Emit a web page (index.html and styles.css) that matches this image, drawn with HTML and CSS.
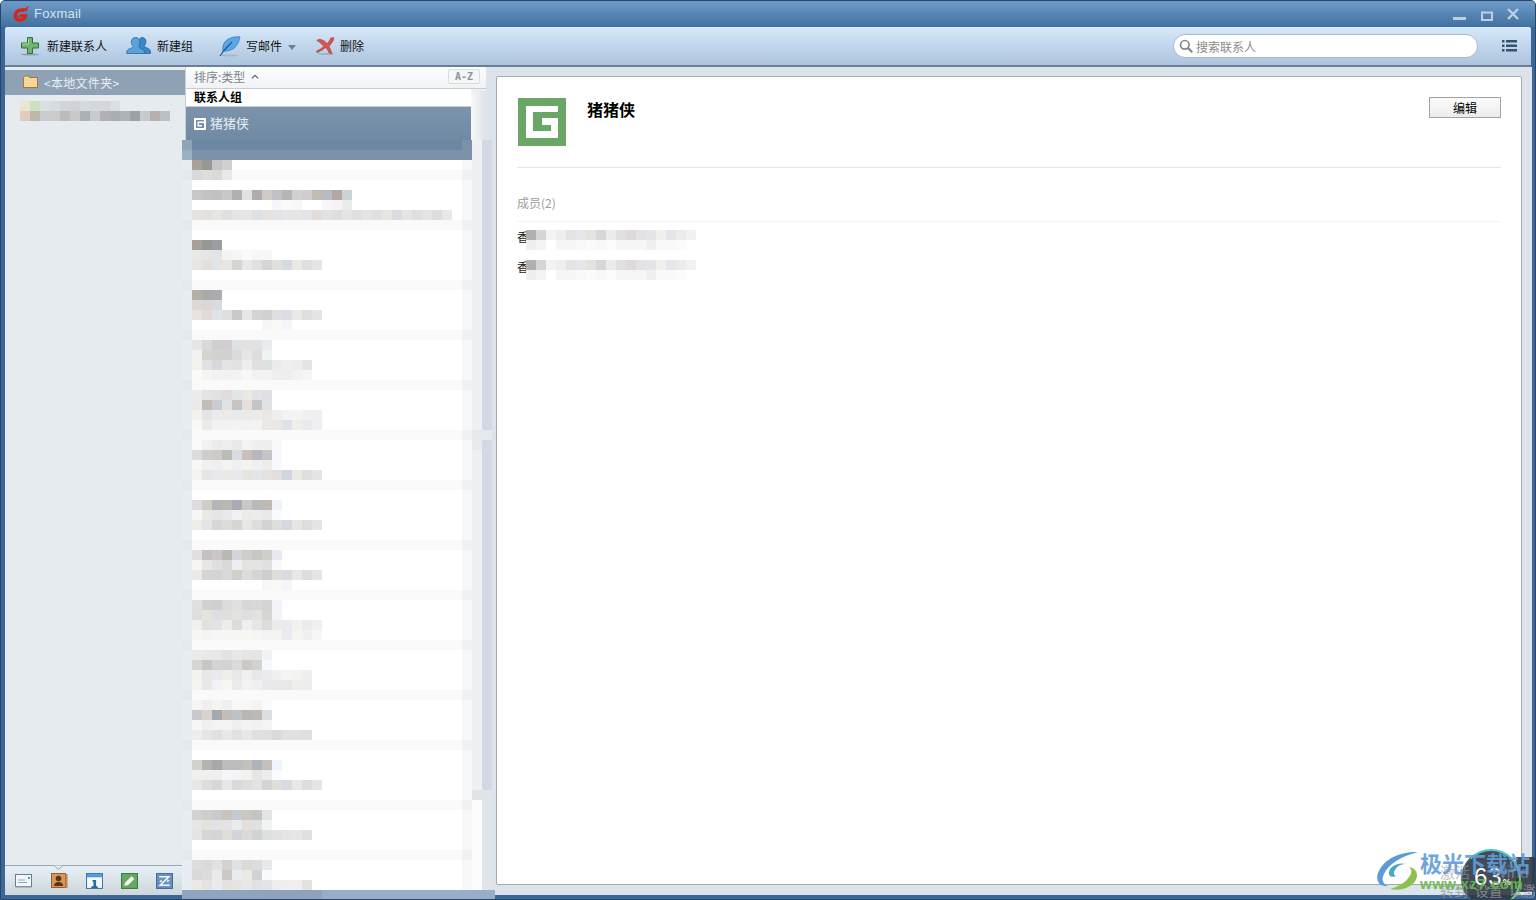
FILE: index.html
```html
<!DOCTYPE html>
<html lang="zh-CN">
<head>
<meta charset="utf-8">
<title>Foxmail</title>
<link rel="stylesheet" href="styles.css">
</head>
<body>
<div class="window">
  <header class="titlebar">
    <svg class="app-logo" viewBox="0 0 16 16"><path fill="#d3261c" d="M15.800 0 12 2.600C8.500 1.600 3.500 2.500 1.500 6 -.3 9.300.3 13 3 14.800c2.100 1.300 5.300 1.200 8-.3 2.200-1.300 3.300-3.300 3.500-6.300H7L5.300 11h4.600c-.8 1.100-2.500 1.500-3.800 1-1.500-.6-2-2.300-1.300-4 .8-2 3-2.500 5-1.700L14 4.500Z"/></svg>
    <span class="app-name">Foxmail</span>
    <div class="win-controls">
      <svg class="win-min" viewBox="0 0 13 3"><rect width="13" height="3" fill="#bccfe3"/></svg>
      <svg class="win-max" viewBox="0 0 12 10"><path fill="none" stroke="#bccfe3" stroke-width="2" d="M1 1.500h10v7.500H1z"/></svg>
      <svg class="win-close" viewBox="0 0 12 12"><path stroke="#bccfe3" stroke-width="2.400" d="M1 1l10 10M11 1 1 11"/></svg>
    </div>
  </header>

  <nav class="toolbar">
    <button class="tool tool-add">
      <svg class="ic-add" viewBox="0 0 20 20"><ellipse cx="10" cy="18.500" rx="9" ry="1" fill="#8da3b8"/><path fill="#6fb56c" stroke="#3d6b40" d="M7.500 1.500h5v5.500h6v5h-6v5.500h-5V12h-6V7h6z"/><path fill="none" stroke="#a5d8a0" d="M8.500 3v5h-6"/></svg>
      <span>新建联系人</span>
    </button>
    <button class="tool tool-group">
      <svg class="ic-group" viewBox="0 0 25 20"><path fill="#3f86c4" stroke="#1f5f9c" stroke-width=".7" d="M16 1.500c2.400 0 4 1.700 4 4.200 0 1.900-.8 3.500-1.900 4.500.4 1 3.400 1.700 5 2.800 1 .7 1.400 2.300 1.400 4.500h-8l-3-6-1-4c0-3.500 1.500-6 3.500-6Z"/><path fill="#5aa2dc" stroke="#1f5f9c" stroke-width=".7" d="M9.500 1.500c2.700 0 4.500 1.900 4.500 4.600 0 2-.9 3.500-2 4.500.4 1.100 3.500 1.800 5.200 3 1 .7 1.500 2 1.500 3.900H.6c0-1.900.5-3.200 1.500-3.900 1.700-1.200 4.800-1.900 5.200-3-1.100-1-2-2.500-2-4.500 0-2.700 1.800-4.600 4.200-4.600Z"/></svg>
      <span>新建组</span>
    </button>
    <button class="tool tool-write">
      <svg class="ic-write" viewBox="0 0 22 21"><ellipse cx="10" cy="19.500" rx="9" ry="1" fill="#a3b6ca"/><path fill="#5aa6e6" stroke="#2f79b8" stroke-width=".7" d="M21 .8C15 .5 8 2 5.200 7 3.800 9.600 3.600 12.600 3.800 15.200 8 15.300 13 14.500 16.300 11 19 8 20.500 4.500 21 .8Z"/><path fill="none" stroke="#1f5c95" stroke-width="1.200" d="M1 20 5 14.500 13 6"/></svg>
      <span>写邮件</span>
      <i class="drop"></i>
    </button>
    <button class="tool tool-del">
      <svg class="ic-del" viewBox="0 0 20 18"><ellipse cx="10" cy="17" rx="8" ry="1" fill="#9db0c4"/><path fill="#d9534f" stroke="#a83a36" stroke-width=".6" d="M.8 3.500 3 2.200c3.800.5 6.500 2.300 8.200 4.500C12.800 5 14 3 14.800 1L18 .6c-.5 3.500-2.800 6.200-5 8.800 1 2 2.200 4.500 3 7.300l-2.900-.8c-.8-2-2-4-3.200-5.500-2.200 1.700-5 3.400-8.800 5.300L.6 14c3-1.400 5.300-3 7.200-4.600C6 7.200 3.700 5 .8 3.500Z"/></svg>
      <span>删除</span>
    </button>
    <div class="search">
      <svg class="ic-search" viewBox="0 0 14 14"><circle cx="5.800" cy="5.800" r="4.300" fill="none" stroke="#7a8a98" stroke-width="1.700"/><path stroke="#7a8a98" stroke-width="2.200" d="m9 9 4.200 4.200"/></svg>
      <span>搜索联系人</span>
    </div>
    <svg class="ic-more" viewBox="0 0 15 12"><path fill="#34536f" d="M0 0h2.500v2.500H0zM4 0h11v2.500H4zM0 4.500h2.500V7H0zM4 4.500h11V7H4zM0 9h2.500v2.500H0zM4 9h11v2.500H4z"/></svg>
  </nav>

  <main class="body">
    <aside class="sidebar">
      <div class="folder-row">
        <svg class="ic-folder" viewBox="0 0 15 13"><path fill="#f6d694" stroke="#a8743a" d="M.5 2.500 1.500 1h4l1 1.500h8v10H.5z"/></svg>
        <span>&lt;本地文件夹&gt;</span>
      </div>
      <svg class="mosaic mosaic-side" data-mosaic="side"></svg>
      <div class="side-fill"></div>
      <div class="tabs">
        <svg class="notch" viewBox="0 0 11 5"><path fill="#e5ebef" stroke="#9ba5ae" d="M0 .5h1l4.500 4 4.500-4h1"/></svg>
        <svg class="tab-ic tab-first" viewBox="0 0 17 14"><rect x=".5" y=".5" width="16" height="12" fill="#f4f7fa" stroke="#6c7d93"/><rect x=".5" y="12" width="16" height="1.500" fill="#8694a8"/><path stroke="#8ea3bb" d="M3 6h7M3 8.500h9"/><rect x="13" y="3" width="2" height="2" fill="#4fa88c"/></svg>
        <svg class="tab-ic" viewBox="0 0 17 16"><rect x=".5" y=".5" width="14" height="14" fill="#d9965a" stroke="#95602f"/><rect x="14.500" y="1" width="2" height="14" fill="#c08550"/><circle cx="7.500" cy="5.500" r="2.800" fill="#5a3318"/><path fill="#5a3318" d="M3 13c0-3 2-4 4.500-4S12 10 12 13z"/></svg>
        <svg class="tab-ic" viewBox="0 0 16 15"><rect x=".5" y=".5" width="15" height="14" fill="#f4f8fb" stroke="#3f77a8"/><rect x="1" y="1" width="14" height="3" fill="#4f97de"/><path fill="#2a6a9c" d="M6 6.500h3.500v6H11V14H5v-1.500h2V8H6z"/></svg>
        <svg class="tab-ic" viewBox="0 0 16 15"><rect x=".5" y=".5" width="15" height="14" fill="#66a862" stroke="#3f7a40"/><path fill="#f2f7f0" d="M3 12l1-3 6-6 2.500 2.500-6 6z"/></svg>
        <svg class="tab-ic" viewBox="0 0 16 15"><rect x=".5" y=".5" width="15" height="14" fill="#6a91c4" stroke="#4a6a93"/><path fill="none" stroke="#f2f6fa" stroke-width="1.500" d="M3 3.500h9L4 11.500h9"/><path fill="#f2f6fa" d="M3 8 5.500 6v3zM13 7l-2.500 2V6z"/></svg>
      </div>
    </aside>

    <section class="list">
      <div class="sort-head">
        <span>排序:类型</span>
        <svg class="caret" viewBox="0 0 8 5"><path fill="none" stroke="#666" stroke-width="1.300" d="m.8 4.400 3.200-3 3.200 3"/></svg>
        <span class="az">A-Z</span>
      </div>
      <div class="list-scroll">
        <div class="list-main">
          <div class="group-label">联系人组</div>
          <div class="contact-row">
            <svg class="row-ic" viewBox="0 0 12 12"><path fill="#fff" fill-rule="evenodd" d="M0 0h12v12H0zM2 2v8h8V5H5v2h3v1.500H3.500v-5H10V2z"/></svg>
            <span>猪猪侠</span>
          </div>
          <div class="list-empty"></div>
        </div>
        <div class="scrollbar"><div class="thumb"></div></div>
      </div>
    </section>

    <section class="detail">
      <article class="card">
        <div class="profile">
          <svg class="avatar" viewBox="0 0 48 48"><rect width="48" height="48" fill="#68a765"/><path fill="#fff" d="M8 8h32v6H15v19h18v-6h-9v-7h16v20H8z"/></svg>
          <h1>猪猪侠</h1>
          <button class="edit">编辑</button>
        </div>
        <div class="members-title">成员(2)</div>
        <div class="member"><span>香</span><svg class="mosaic mosaic-member" data-mosaic="member"></svg></div>
        <div class="member"><span>香</span><svg class="mosaic mosaic-member" data-mosaic="member"></svg></div>
      </article>
    </section>
  </main>

  <svg class="mosaic mosaic-list" data-mosaic="list"></svg>

  <div class="watermark">
    <div class="speed-tail"></div>
    <div class="speed"><span class="speed-num">63</span><span class="speed-pct">%</span></div>
    <span class="wm-activate">激活 Wind</span>
    <span class="wm-activate2">转到"设置"以激</span>
    <svg class="wm-logo" viewBox="0 0 44 40"><path fill="#5b9bd8" d="M42 1C28 0 8 6 2 22c-3 9 3 14 10 13-5-2-7-6-4-12C12 13 26 5 42 1Z"/><path fill="#8cc152" d="M14 38c12 3 26-3 27-13 .5-5-3-8-8-9 3 3 3 6 0 10-4 6-12 10-19 12Z"/><path fill="#4da6c8" d="M30 13c-8-2-16 2-17 8-1 4 3 6 7 4-2-1-3-3-1-6 2-4 6-6 11-6Z"/></svg>
    <span class="wm-title">极光下载站</span>
    <span class="wm-url">www.xz7.com</span>
  </div>
</div>
<script src="app.js"></script>
</body>
</html>
```

FILE: styles.css
```css
* { box-sizing: border-box; }
html, body { margin: 0; padding: 0; height: 100%; overflow: hidden; }
body { font-family: "Noto Sans CJK SC", "Liberation Sans", sans-serif; font-size: 12px; color: #111; }
button { font: inherit; color: inherit; background: none; border: 0; padding: 0; }

.window { position: relative; width: 1536px; height: 900px; display: flex; flex-direction: column; background: #3b6698; border: 1px solid #2b4568; border-radius: 5px 5px 0 0; overflow: hidden; }

.titlebar { flex: none; height: 26px; display: flex; align-items: center; padding: 0 16px 0 12px; background: linear-gradient(#6f9bc8, #41709f); color: #d6e2ee; }
.app-logo { width: 16px; height: 16px; margin-bottom: 1px; }
.app-name { margin-left: 5px; font: 13px/16px "Liberation Sans", sans-serif; letter-spacing: .25px; }
.win-controls { margin-left: auto; display: flex; align-items: flex-start; height: 26px; }
.win-min { width: 13px; height: 3px; margin-top: 16px; }
.win-max { width: 12px; height: 10px; margin: 10px 0 0 15px; }
.win-close { width: 12px; height: 12px; margin: 7px 0 0 14px; }

.toolbar { flex: none; height: 40px; margin: 0 4px; display: flex; align-items: center; padding: 0 14px 0 15px; background: linear-gradient(#d6e9fa, #adc4de); border-bottom: 2px solid #6a7f96; border-radius: 2px 2px 0 0; }
.tool { display: flex; align-items: center; height: 24px; line-height: 16px; white-space: nowrap; }
.ic-add { width: 20px; height: 20px; margin-right: 7px; }
.tool-add span { margin-left: 0; }
.tool-group { margin-left: 19px; }
.ic-group { width: 25px; height: 20px; margin-right: 6px; }
.tool-write { margin-left: 26px; }
.ic-write { width: 22px; height: 21px; margin-right: 5px; }
.drop { width: 0; height: 0; margin: 2px 0 0 6px; border: 4px solid transparent; border-top: 5px solid #6d8094; border-bottom: 0; }
.tool-del { margin-left: 20px; }
.ic-del { width: 20px; height: 18px; margin-right: 4px; }
.search { margin-left: auto; width: 305px; height: 24px; display: flex; align-items: center; padding-left: 5px; background: #fff; border: 1px solid #a7b8cb; border-radius: 12px; color: #8b8b8b; }
.ic-search { width: 14px; height: 14px; margin-right: 3px; }
.ic-more { width: 15px; height: 12px; margin-left: 24px; }

.body { flex: 1; min-height: 0; display: flex; margin: 0 3px 4px 4px; }

.sidebar { flex: none; width: 181px; display: flex; flex-direction: column; background: #e5ebef; border-right: 1px solid #c9d0d7; }
.folder-row { flex: none; margin-top: 3px; height: 25px; display: flex; align-items: center; padding-left: 18px; background: #8fa2b5; color: #e8edf2; letter-spacing: .3px; }
.folder-row span { margin-top: -1px; }
.ic-folder { width: 15px; height: 13px; margin: -2px 6px 0 0; }
.mosaic { display: block; shape-rendering: crispEdges; }
.mosaic-side { flex: none; width: 150px; height: 20px; margin: 6px 0 0 15px; }
.side-fill { flex: 1; }
.tabs { position: relative; flex: none; height: 30px; display: flex; align-items: center; padding: 0 0 0 11px; margin-right: 3px; gap: 18px; background: linear-gradient(#e6f0f6, #cdd6db); border-top: 1px solid #9ba5ae; }
.tab-ic { width: 17px; height: 16px; }
.tab-first { margin: 0 1px 0 -1px; }
.notch { position: absolute; left: 48px; top: -1px; width: 11px; height: 5px; }

.list { flex: none; width: 300px; display: flex; flex-direction: column; background: #fff; }
.sort-head { flex: none; height: 22px; display: flex; align-items: center; padding: 0 6px 2px 8px; background: linear-gradient(#fcfdfd, #f0f3f6); border-bottom: 1px solid #c5ccd3; color: #808488; }
.caret { width: 8px; height: 5px; margin-left: 6px; }
.az { margin-left: auto; width: 32px; height: 15px; text-align: center; font: bold 10px/13px "DejaVu Sans Mono", monospace; color: #8a949e; background: #f4f6f8; border: 1px solid #d8dde2; border-radius: 2px; }
.list-scroll { flex: 1; min-height: 0; display: flex; }
.list-main { width: 285px; flex: none; display: flex; flex-direction: column; }
.group-label { flex: none; height: 18px; padding-left: 8px; line-height: 15px; font-weight: 700; color: #000; border-bottom: 1px solid #c5ccd3; }
.contact-row { flex: none; height: 53px; display: flex; align-items: flex-start; padding: 7px 0 0 8px; background: linear-gradient(#7b93ab, #6a85a0); color: #e8edf3; font-size: 13px; line-height: 18px; }
.row-ic { width: 12px; height: 12px; margin: 4px 4px 0 0; }
.list-empty { flex: 1; }
.scrollbar { flex: 1; background: #eef0f1; }
.thumb { height: 49px; margin-top: 2px; background: linear-gradient(90deg, #f8f8f8, #dfe2e4); }

.detail { flex: 1; min-width: 0; display: flex; padding: 9px 10px 10px 10px; background: #dce3ea; }
.card { flex: 1; padding: 21px 20px 0 20px; background: #fff; border: 1px solid #a2aab2; border-radius: 2px; }
.profile { display: flex; align-items: flex-start; height: 70px; border-bottom: 1px solid #e6e6e6; }
.avatar { width: 48px; height: 48px; margin-left: 1px; }
.profile h1 { margin: 0 0 0 21px; font-size: 16px; line-height: 22px; font-weight: 700; color: #000; }
.edit { margin: -1px 0 0 auto; width: 72px; height: 21px; line-height: 17px; color: #000; background: linear-gradient(#fbfbfb, #ececec); border: 1px solid #a3a3a3; }
.members-title { margin-top: 26px; height: 28px; line-height: 17px; color: #a09c9c; border-bottom: 1px dotted #ebebeb; }
.member { display: flex; align-items: flex-start; height: 30px; padding-top: 6px; color: #222; line-height: 18px; }
.member span { flex: none; width: 12px; margin-right: -3px; }
.mosaic-member { width: 170px; height: 20px; margin-top: 2px; }

.mosaic-list { position: absolute; left: 181px; top: 139px; width: 314px; height: 760px; }

.watermark { position: absolute; left: 1375px; top: 847px; width: 160px; height: 52px; overflow: hidden; }
.wm-logo { position: absolute; left: 0; top: 3px; width: 44px; height: 40px; }
.wm-title { position: absolute; left: 44px; top: 0; font-size: 22px; line-height: 28px; font-weight: 700; color: #5f9cd8; white-space: nowrap; opacity: .9; }
.wm-url { position: absolute; left: 44px; top: 27px; font: bold 15px/18px "Liberation Sans", sans-serif; letter-spacing: .5px; color: #65b847; white-space: nowrap; opacity: .9; }
.wm-activate { position: absolute; left: 64px; top: 14px; font-size: 15px; line-height: 20px; word-spacing: 20px; color: #9a9a9a; opacity: .6; white-space: nowrap; }
.wm-activate2 { position: absolute; left: 64px; top: 33px; font-size: 14px; line-height: 18px; color: #9a9a9a; opacity: .75; white-space: nowrap; }
.speed-tail { position: absolute; left: 140px; top: 9px; width: 20px; height: 35px; background: #2f3b47; opacity: .92; border-radius: 0 3px 3px 0; }
.speed { position: absolute; left: 85px; top: 1px; width: 60px; height: 60px; padding: 13px 0 0 11px; border-radius: 50%; background: rgba(45, 55, 68, .9); border: 2px solid #3f5e66; border-top-color: #4ec7c0; border-right-color: #7ac27a; color: #fff; white-space: nowrap; }
.speed-num { font: 24px/26px "Liberation Sans", sans-serif; letter-spacing: 1px; }
.speed-pct { font: bold 9px/12px "Liberation Sans", sans-serif; }
```

FILE: app.js
```js
var NS = "http://www.w3.org/2000/svg";
var member = [
  [0, 0, "b0b0b0 d3d7da f3f3f3 eeeeee e6e4e3 e5e7ea e5e3e1 d8d6d6 ececec dfe1e1 dddad8 e3e3e6 e4e5e8 f1f0ee e6e6ea ecebe9 f1f1f1"],
  [10, 0, "eeeeee f3f3f3 ffffff f6f6f6 f6f6f6 f9f9f9 fbfbf9 f8f8f8 fcfcfc f6f6f6 f6f6f6 f6f6f6 eff0f0 f9f9f9 f9f9f9 fbfbfb ffffff"]
];
var side = [
  [0, 0, "e9e5cf cde0bf dde0e3 d9dcdf d3d5d8 cfd2d6 d6dae0 d5d7da d4d6da dcdfe2"],
  [10, 0, "dfcdbb beb8ac c9cbcf c9cbcf bcbdbb c9c9c9 aeb1b2 c8cacf b0b1b3 abaeb0 b0b3b6 9fa0a2 c8cbcd b8b0ae bcc0c6"]
];
/* rows of the list mosaic: page y, first-column page x, colours of 10px cells */
var rows = [
  [160, 192, "a8a29a 979795 c4c6c8 d0d0d0"],
  [170, 192, "d9d9d9 dfddd9 d9d9db e8e9eb"],
  [190, 192, "c9c7c5 c3c1c3 c3c1bf c8c8c6 b3afb0 e3e2de adacae cfcac6 c0c2c8 b8b6b5 d1d1d1 d0cfcd c2bbb1 b9bac3 b5a6a6 cdd3d5"],
  [200, 272, "f7f7f9 fbf9f6 f7f8f8 ffffff ffffff f8f7f7 f5f3f3 ebebeb"],
  [210, 192, "e5e2df e1e1e1 e6e6e2 dfdfe1 e5e5e5 e8e5e2 dfe0e4 e6e2df e2e3e7 e6e6e6 e7e5e5 e3e4e6 e3dcd8 e2e2e4 dedede e4e4e4 dfe0e2 e3e4e6 e2dfe0 e7e7e2 dbdcde e5e5e5 dfdfdf e3e4e6 dddddd e8e8e8"],
  [240, 192, "a89f98 969895 9c9da2"],
  [250, 192, "e8e8e6 e6e6e4 e2e4e6 f4f4f2 f5f5f5 fafafa f7f7f7 f7f7f7"],
  [260, 192, "e8e6e3 e5dfdb e2e5e8 e8e6e3 d4d4d4 e8e8e8 dfe0e0 d7d4d5 e0e0de d5dae0 ebe9e6 dfdfdf e5e5e5"],
  [290, 192, "b5afa8 a8aaa8 abacb0"],
  [300, 192, "dcd9d7 d9d8d6 dadadd"],
  [310, 192, "e6e3e1 e1dbd7 dfe2e8 e1dfdc c9c9c9 e6e6e4 d4d4d4 d2d1d0 dfdfdf dcdde2 ebe9e6 dfdfdf e5e5e5"],
  [320, 262, "f7f7f7 faf9f8 f3f5f8"],
  [340, 192, "e6e6e6 d9d9d7 d0cecf d0cecf dfe2e4 e3e1de e1e2e3 e9ebed"],
  [350, 192, "f2f2f2 d5d3d2 d3d2d2 d2d1d0 d9dbdf e5e7e6 e0dcdb f0f3f6"],
  [360, 192, "f3f2ec dfe1e3 d6d8db e4e4e4 e1e3e3 eeefec e0e1e1 dfe2e0 ebedec efefef eeecec e6e5e3"],
  [370, 192, "fbfaf6 f5f5f5 f2f2f2 f2f2f2 f2f3f3 f7f7f7 f2f2f2 f3f3f3 eeeeee eeeeee f2f2f2 f5f5f3"],
  [390, 192, "ececec e3e3e1 e2e2e0 dfdcdc e1e5e5 ece8e4 e1e2e6 dfe0e3"],
  [400, 192, "ece9ec c4bcb8 c8cbcf dfe3e6 c5c5c5 e6dfdc c3c5c9 e0e2e6"],
  [410, 192, "f4f2ef e5e5e5 ebebeb ece9e6 e8eaed eaebe8 ebebe8 eae7e5 edefed f2f3f5 f4f4f4 eff0f2 f0f0f0"],
  [420, 192, "faf8f4 ebebeb f2f2f2 f2f2f2 f3f3f3 f2f2f0 f3f3f3 ebe8e5 eae8e6 dfe1e8 f0eeea eaeaee f0f0f0"],
  [440, 192, "fafafa f2f1ef ebebeb eeeeee e8e9ed f3f3f3 eeefef ecefec f8f9fc"],
  [450, 192, "dcdcde cfcdcd cfc9c8 bcbcb6 d9dce2 c9c0bb b5b9bf c5c5c7 f8f9fd"],
  [460, 192, "f7f7f5 f0f0f0 efeff1 f2f3f3 eef1f0 f3f3ef f0f1ee ecedea f8f9fc"],
  [470, 192, "f3f3ef e8e5e6 e7e9ec ebe9e6 e7e9eb e6e3e0 e3e6e9 e5e3e1 e2e0dd d1d5df ebe9e6 dfdfdf e5e5e5"],
  [500, 192, "dedce1 d1cdc5 b4b6b8 b9b8b2 aaaab5 c8c8c6 b8baba bfbbb3 f0f3f9"],
  [510, 192, "f7f7f7 ece9e5 e5e5e5 e8e9ea f0f1f2 ebebe9 eeebeb e8e9eb fafbfd"],
  [520, 192, "eeeee9 e6e4e2 d6d7d9 dcdcda d5d5d3 e7e7e5 dddddd d2d2d2 dededc d3d9de e8e6e3 dddddd e5e5e5"],
  [550, 192, "e2e0e3 c6c1c0 cac6c7 bab9b5 d5d6dc cfcdc9 c7c7c3 cfcfcb e8e9ef"],
  [560, 192, "f5f5f5 e9e7e4 dfdfdf d9d9d9 eceef3 e5e4e2 e4e4e4 e2e0de f8f9fb"],
  [570, 192, "ece9e6 d4d4d4 d1d5d3 d9d9d9 d0cfcb dcdcd8 d5d5d5 d0cdce dededc d9dbe0 eae8e5 dddddd e5e5e5"],
  [580, 262, "f7f7f7 faf9f8 f3f5f8"],
  [600, 192, "e0e0e0 d2d1cc ced1d3 dcdcdc dfe0e4 d8d7d5 d8d8d8 d4d4d1 f2f3f8"],
  [610, 192, "dfdfdf e4e3e0 dcdee0 dfdfdf e2e2de dfdfdf e2e2e2 d6d6d3 f2f4f8"],
  [620, 192, "f0f0f0 e3e1de e1e3e6 ededeb dedcd8 edeff1 e6e6e6 dddbdb ebebeb e9ebee f3f3ee ebebeb f0f0f0"],
  [630, 192, "f7f7f5 f4f4f2 f5f7f5 f5f7f5 f5f7f5 f7f7f3 f5f5f3 f3f3f1 f5f3ef e9ebef f4f4f2 f0f0f0 f7f7f7"],
  [650, 192, "ebebe9 e9e9e7 e6e9e9 e4e2de e6e8ea e7e5e3 e5e5e5 f0f2f5"],
  [660, 192, "d6d6d6 c9c6c3 d2d4d6 d2d3d5 d9dada ccc9c6 d2d2d2 f6fafc"],
  [670, 192, "f2f2ef e8e8e8 e8eaed efeeeb e8e8e8 eff0f2 e8e8e8 eaebee f0f0f0 f4f4f4 f3f3f1 efeeec"],
  [680, 192, "f3f3ef e8e8e8 f0f2f5 f6f6f2 ebebeb f2f2f2 efefef e8e9eb e8e8e6 e8e8e6 eeeeec ededeb"],
  [700, 192, "f5f5f5 eeeeee f5f4f0 edeff0 f5f8f8 f8f7f3 f5f3ef f9fafc"],
  [710, 192, "c9c9cb d8d3cd a5a7af c3bdb8 bdc2c6 b9b6b3 bcbab9 dddee2"],
  [720, 192, "f6f6f6 f0f0f0 f2f4f4 f2f4f4 eeeff1 f2f3f4 f2f2f4 f4f5f7"],
  [730, 192, "eeeeec e8e6e4 dfe0e2 eae8e5 e1e1e1 e8e8e8 e0e0e0 dfdfdf dadad9 e0e0e0 e1e1e3 dfdfdc"],
  [760, 192, "d1d1cf b7b4af a7a8aa bdbbbd bcbcbc c4c0bb adb3b8 c3bfba eff3fc"],
  [770, 192, "f0f0ee f0f0ee f0f0f0 f5f6f9 f3f4f5 f2f2ef e6e6e6 ececec fafbfd"],
  [780, 192, "e9e7e4 dcdde1 d5d7d9 e9e7e4 d9d9d9 dfdedb e3e3e1 d4d4d4 dededc d7dbe2 eae8e5 dddddd e5e5e5"],
  [810, 192, "d3d3d3 cfcecb c9cacb c9c3ba c6c9d0 cdc7c2 c3c4c4 e3e4e6"],
  [820, 192, "e6e6e6 e5e2de e2e3e5 e3e3e5 e9ebee e2dfdd e0e0e0 f2f3f5"],
  [830, 192, "e6e4e1 d6d6d6 d3d4d5 dfddda d1d4d8 dcdad6 d2d3d5 dde0e0 e2e2e2 e5e5e5 e6e6e6 e2e0dd"],
  [860, 192, "dfdddc dcdad8 e3e0e1 d4d1d1 dfe3e5 ded9d5 dbdcde e8e9ed"],
  [870, 192, "dadada dcdcda eaeaec ccc8c5 e8ecef e9e9e5 d2d1d3 f9fbfb"],
  [880, 192, "ebe8e6 e5e3e1 e9ebed e4e1df e4e4e2 e8e8e6 e1e2e3 e3e5e5 eeeeec efefed f0efed e3e2df"]
];
/* long strips: x, y, width, height, colour */
var strips = [
  [182, 160, 10, 740, "e9ecf0"], [462, 160, 10, 740, "f7f8f9"],
  [472, 140, 10, 660, "eef0f1"], [472, 800, 10, 100, "fcfcfc"],
  [482, 140, 10, 660, "d3d9e2"], [482, 800, 10, 100, "e0e5e9"],
  [492, 140, 3, 760, "dce3ea"],
  [182, 140, 290, 10, "6c87a1"], [182, 150, 290, 10, "7b92a9"],
  [182, 140, 10, 10, "8fa4b8"], [182, 150, 10, 10, "9ab0c4"], [462, 140, 10, 20, "7b92a9"]
];
[170, 220, 280, 330, 380, 430, 480, 540, 590, 640, 690, 740, 800, 850].forEach(function (y) {
  strips.push([192, y, 270, 10, "fafafa"]);
  strips.push([182, y, 10, 10, "e5e9ec"]);
  strips.push([462, y, 10, 10, "eff1f3"]);
});
strips.push([472, 430, 20, 10, "e4e9eb"], [472, 440, 10, 10, "e7ebed"], [472, 790, 20, 10, "dfe4e6"]);
strips.push([182, 890, 313, 10, "98aec8"], [182, 890, 100, 10, "8fa5bf"], [262, 890, 60, 10, "8ea2bb"]);

function rect(svg, x, y, w, h, c) {
  var r = document.createElementNS(NS, "rect");
  r.setAttribute("x", x); r.setAttribute("y", y);
  r.setAttribute("width", w); r.setAttribute("height", h);
  r.setAttribute("fill", "#" + c);
  svg.appendChild(r);
}
function cells(svg, data, ox, oy) {
  data.forEach(function (row) {
    row[2].split(" ").forEach(function (c, i) {
      rect(svg, row[1] + i * 10 - ox, row[0] - oy, 10, 10, c);
    });
  });
}
document.querySelectorAll("[data-mosaic]").forEach(function (svg) {
  var kind = svg.getAttribute("data-mosaic");
  if (kind === "member") { cells(svg, member, 0, 0); }
  else if (kind === "side") { cells(svg, side, 0, 0); }
  else {
    strips.forEach(function (s) { rect(svg, s[0] - 182, s[1] - 140, s[2], s[3], s[4]); });
    cells(svg, rows, 182, 140);
  }
});
```
